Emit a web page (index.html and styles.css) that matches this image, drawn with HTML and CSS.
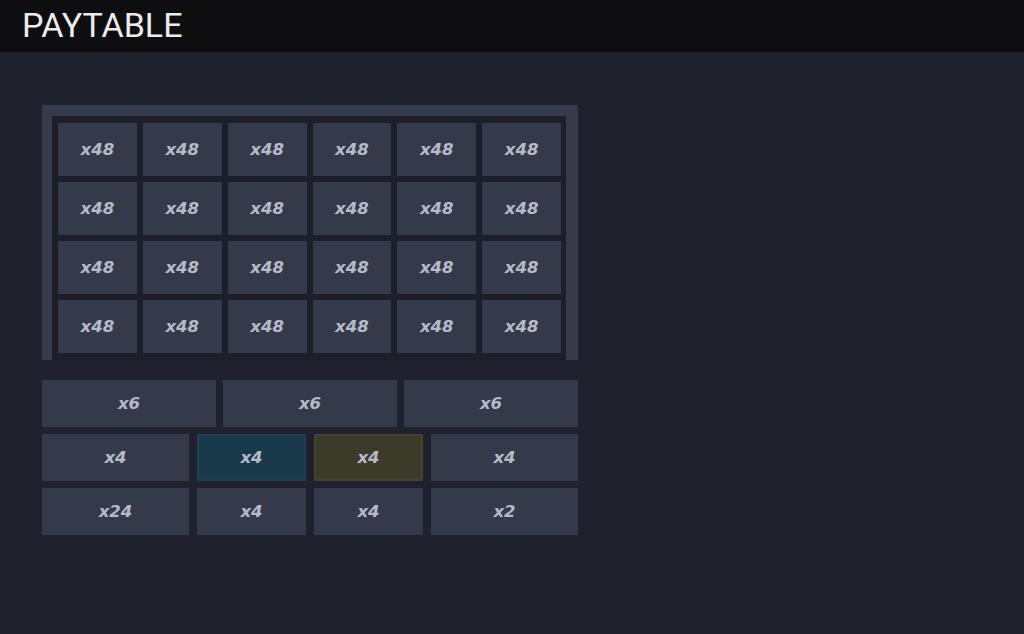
FILE: index.html
```html
<!DOCTYPE html>
<html>
<head>
<meta charset="utf-8">
<link rel="stylesheet" href="styles.css">
</head>
<body>
<header class="topbar"><h1 class="title">PAYTABLE</h1></header>
<main class="main">
  <section class="frame">
    <div class="grid">
      <div class="cell">x48</div><div class="cell">x48</div><div class="cell">x48</div><div class="cell">x48</div><div class="cell">x48</div><div class="cell">x48</div>
      <div class="cell">x48</div><div class="cell">x48</div><div class="cell">x48</div><div class="cell">x48</div><div class="cell">x48</div><div class="cell">x48</div>
      <div class="cell">x48</div><div class="cell">x48</div><div class="cell">x48</div><div class="cell">x48</div><div class="cell">x48</div><div class="cell">x48</div>
      <div class="cell">x48</div><div class="cell">x48</div><div class="cell">x48</div><div class="cell">x48</div><div class="cell">x48</div><div class="cell">x48</div>
    </div>
  </section>
  <section class="bets">
    <div class="row3">
      <div class="cell">x6</div><div class="cell">x6</div><div class="cell">x6</div>
    </div>
    <div class="row4">
      <div class="cell">x4</div><div class="cell teal">x4</div><div class="cell olive">x4</div><div class="cell">x4</div>
    </div>
    <div class="row4">
      <div class="cell">x24</div><div class="cell">x4</div><div class="cell">x4</div><div class="cell">x2</div>
    </div>
  </section>
</main>
</body>
</html>
```
FILE: styles.css
```css
html, body {
  margin: 0;
  padding: 0;
  background: #1f222d;
  width: 1024px;
  height: 634px;
  overflow: hidden;
}
.topbar {
  height: 52px;
  background: #0e0e10;
  display: flex;
  align-items: center;
  padding-left: 22px;
}
.title {
  margin: 0;
  font-family: Roboto, "Liberation Sans", sans-serif;
  font-weight: 400;
  font-size: 34px;
  color: #ececec;
  line-height: 1;
  position: relative;
  top: -1px;
}
.main {
  padding: 53px 0 0 42px;
}
.frame {
  width: 536px;
  box-sizing: border-box;
  border-style: solid;
  border-color: #363b4c;
  border-width: 11px 12px 0 10px;
  background: #1c1f29;
  padding: 7px 5px 7px 6px;
}
.grid {
  display: grid;
  grid-template-columns: repeat(6, 1fr);
  grid-auto-rows: 53px;
  gap: 6px;
}
.cell {
  background: #343a4a;
  color: #b6bac8;
  font-family: "DejaVu Sans", sans-serif;
  font-style: italic;
  font-weight: bold;
  font-size: 16.5px;
  display: flex;
  align-items: center;
  justify-content: center;
  box-sizing: border-box;
}
.bets {
  width: 536px;
  margin-top: 20px;
  display: flex;
  flex-direction: column;
  gap: 7px;
}
.row3 {
  display: grid;
  grid-template-columns: repeat(3, 1fr);
  gap: 7px;
  height: 47px;
}
.row4 {
  display: grid;
  grid-template-columns: 147px 109px 109px 147px;
  gap: 8px;
  height: 47px;
}
.teal {
  background: #183a4b;
  border: 2px solid #213f50;
}
.olive {
  background: #3c3a28;
  border: 2px solid #45422f;
}
```
